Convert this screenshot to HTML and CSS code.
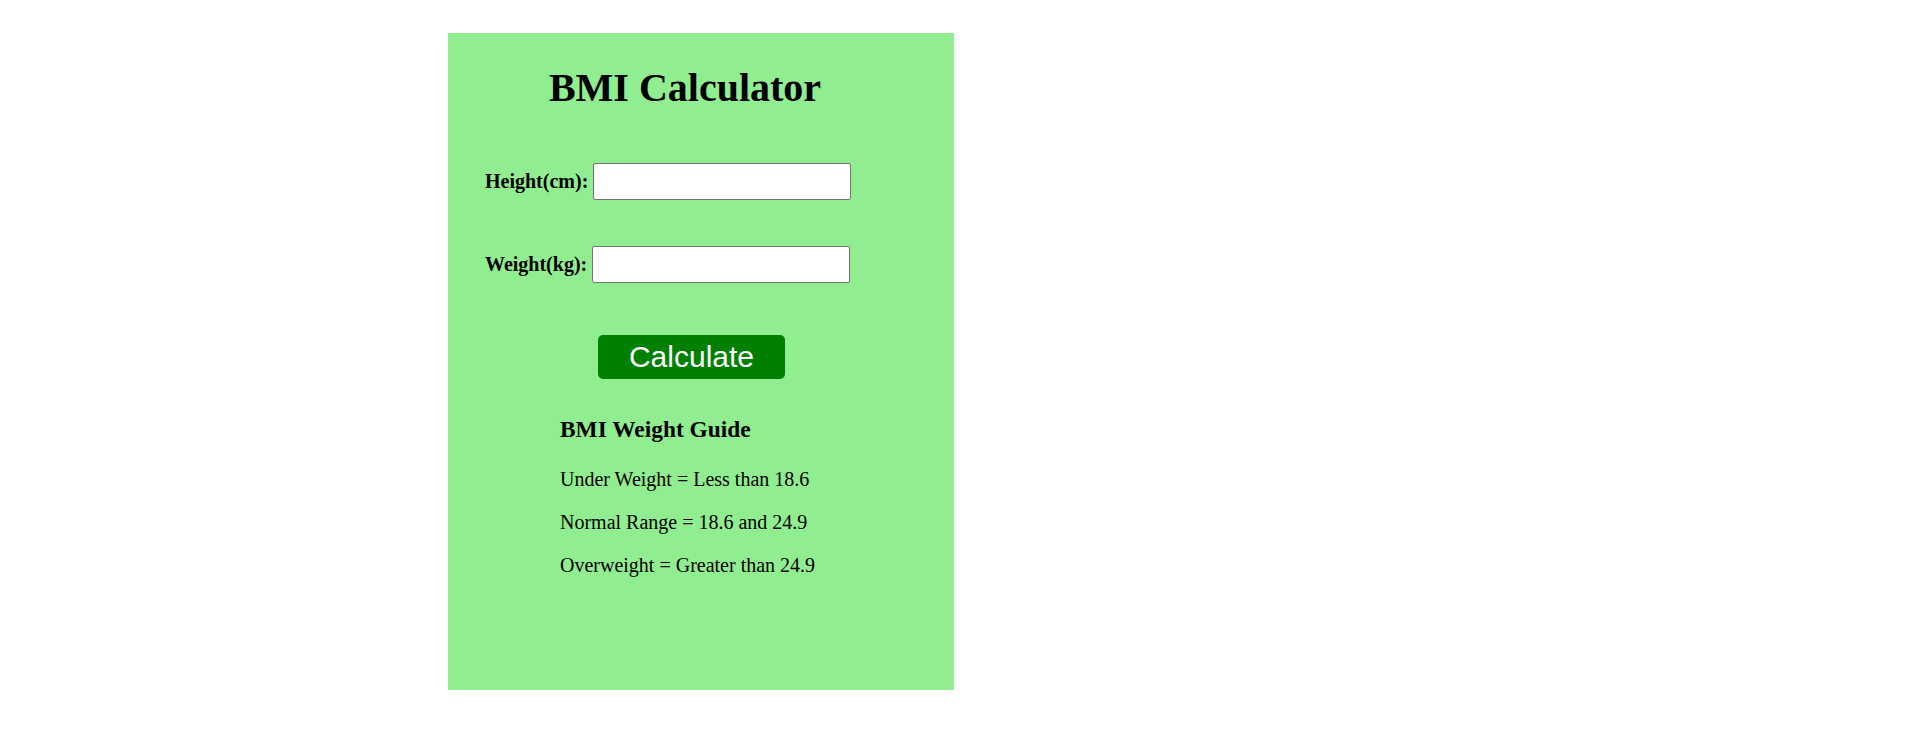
FILE: index.html
```html
<!DOCTYPE html>
<html lang="en">
<head>
<meta charset="utf-8">
<title>BMI Calculator</title>
<link rel="stylesheet" href="styles.css">
</head>
<body>
<div class="card">
  <h1 class="title">BMI Calculator</h1>
  <form class="form">
    <div class="row">
      <label class="label" for="height">Height(cm):</label>
      <input class="field" id="height" type="text">
    </div>
    <div class="row row-second">
      <label class="label" for="weight">Weight(kg):</label>
      <input class="field" id="weight" type="text">
    </div>
    <button class="calc" type="button">Calculate</button>
  </form>
  <div class="guide">
    <h3 class="guide-title">BMI Weight Guide</h3>
    <p class="guide-line">Under Weight = Less than 18.6</p>
    <p class="guide-line">Normal Range = 18.6 and 24.9</p>
    <p class="guide-line">Overweight = Greater than 24.9</p>
  </div>
</div>
</body>
</html>
```

FILE: styles.css
```css
html, body {
  margin: 0;
  padding: 0;
  background: #ffffff;
}

body {
  font-family: "Liberation Serif", "Times New Roman", serif;
  font-size: 20px;
  color: #000000;
}

.card {
  box-sizing: border-box;
  width: 506px;
  height: 657px;
  margin: 33px 0 0 448px;
  padding: 32px 0 0 37px;
  background: #90ee90;
  display: flex;
  flex-direction: column;
}

.title {
  margin: 0 69px 0 0;
  font-size: 40px;
  line-height: 46px;
  font-weight: bold;
  text-align: center;
}

.form {
  display: flex;
  flex-direction: column;
  align-items: flex-start;
  margin: 52px 0 0 0;
}

.row {
  display: flex;
  align-items: center;
  gap: 5px;
  height: 37px;
}

.row-second {
  margin-top: 46px;
}

.label {
  font-weight: bold;
  font-size: 20px;
  line-height: 23px;
}

.field {
  box-sizing: border-box;
  width: 258px;
  height: 37px;
  margin: 0;
  border: 1px solid #767676;
  border-radius: 2px;
  background: #ffffff;
  font-size: 20px;
  padding: 2px 4px;
}

.calc {
  box-sizing: border-box;
  width: 187px;
  height: 44px;
  margin: 52px 0 0 113px;
  padding: 0;
  border: none;
  border-radius: 5px;
  background: #008000;
  color: #ffffff;
  font-family: "Liberation Sans", Arial, sans-serif;
  font-size: 30px;
  line-height: 44px;
  text-align: center;
}

.guide {
  margin: 37px 0 0 75px;
}

.guide-title {
  margin: 0;
  font-size: 23.4px;
  line-height: 27px;
  font-weight: bold;
}

.guide-line {
  margin: 25px 0 0 0;
  font-size: 20px;
  line-height: 23px;
}

.guide-line + .guide-line {
  margin-top: 20px;
}
```
